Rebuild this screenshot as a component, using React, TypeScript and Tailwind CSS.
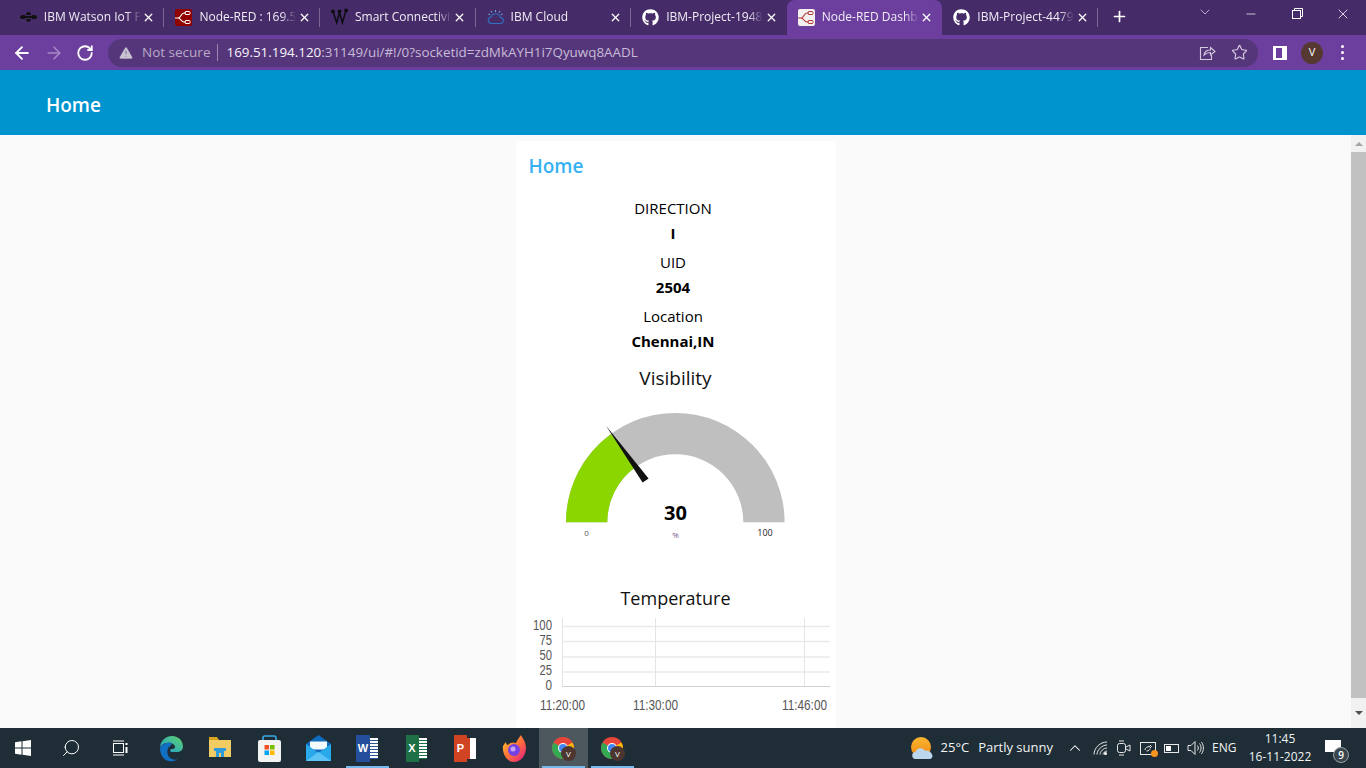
import { ReactNode } from 'react';
import { FaGithub } from 'react-icons/fa';
import { ArrowLeft, ArrowRight, ChevronDown, ChevronUp, Minus, Plus, RotateCw, Search, Star, TriangleAlert, X } from 'lucide-react';

const NodeRedIcon = ({ dark }: { dark?: boolean }) => (
  <svg width="17" height="17" viewBox="0 0 17 17">
    <rect width="17" height="17" rx="2" fill={dark ? '#8f0000' : '#f4f0f0'} />
    <path
      d="M0 9h3c3 0 3-5 6-5h2M3 9c3 0 3 4 6 4h2"
      fill="none"
      stroke={dark ? '#fff' : '#b03a3a'}
      strokeWidth="1.2"
    />
    <rect x="10" y="2.5" width="5" height="3" rx="1" fill="none" stroke={dark ? '#fff' : '#b03a3a'} />
    <rect x="10" y="11.5" width="5" height="3" rx="1" fill="none" stroke={dark ? '#fff' : '#b03a3a'} />
  </svg>
);

const WatsonIcon = () => (
  <svg width="17" height="12" viewBox="0 0 17 12" fill="#111">
    <ellipse cx="8.5" cy="6" rx="3" ry="5" />
    <ellipse cx="3.5" cy="6" rx="3.5" ry="2" />
    <ellipse cx="13.5" cy="6" rx="3.5" ry="2" />
    <rect x="5" y="4" width="7" height="1" fill="#452c68" />
    <rect x="5" y="7" width="7" height="1" fill="#452c68" />
  </svg>
);

const WeeblyIcon = () => (
  <svg width="18" height="18" viewBox="0 0 18 18" fill="none" stroke="#0b0b12" strokeWidth="1.6">
    <path d="M2 3l4 12 3-11 3 11 4-13" />
    <circle cx="2" cy="3" r="1.2" fill="#0b0b12" />
    <circle cx="9" cy="3" r="1.2" fill="#0b0b12" />
    <circle cx="16" cy="2" r="1.2" fill="#0b0b12" />
  </svg>
);

const CloudIcon = () => (
  <svg width="17" height="16" viewBox="0 0 17 16" fill="none" stroke="#2f6fc4" strokeWidth="1.1">
    <path d="M4 14.5h9a3 3 0 0 0 .5-6 5 5 0 0 0-9.5-.5 3.3 3.3 0 0 0 0 6.5z" />
    <path d="M8.5 1v2M4 2l1 1.5M13 2l-1 1.5M1.5 5l1.5.8M15.5 5l-1.5.8" stroke="#6ea6de" />
  </svg>
);

const tabs: { title: string; icon: ReactNode; active?: boolean }[] = [
  { title: 'IBM Watson IoT P', icon: <WatsonIcon /> },
  { title: 'Node-RED : 169.5', icon: <NodeRedIcon dark /> },
  { title: 'Smart Connectivit', icon: <WeeblyIcon /> },
  { title: 'IBM Cloud', icon: <CloudIcon /> },
  { title: 'IBM-Project-1948', icon: <FaGithub className="text-white text-[17px]" /> },
  { title: 'Node-RED Dashb', icon: <NodeRedIcon />, active: true },
  { title: 'IBM-Project-4479', icon: <FaGithub className="text-white text-[17px]" /> },
];

function TabStrip() {
  return (
    <div className="h-[35px] shrink-0 bg-[#452c68] flex pl-[8.8px] relative">
      {tabs.map((tab, i) => (
        <div
          key={i}
          className={
            'w-[155.6px] h-[35px] flex items-center pl-[11px] pb-[1px] relative ' +
            (tab.active ? 'bg-[#6c3f9e] rounded-t-lg' : '')
          }
        >
          <div className="w-[17px] flex justify-center shrink-0">{tab.icon}</div>
          <div className="ml-[7px] w-[97px] whitespace-nowrap text-xs text-[#f0ecf5] [mask-image:linear-gradient(to_right,black_85%,transparent)]">
            {tab.title}
          </div>
          <X size={13} strokeWidth={2.4} className="text-white ml-[1.5px]" />
          {!tab.active && i !== 4 && <div className="absolute right-0 top-[8px] h-[19px] w-px bg-[#7d688f]" />}
        </div>
      ))}
      <Plus size={17} strokeWidth={2.4} className="text-white ml-[13px] mt-[8px]" />
      <div className="ml-auto flex items-start pt-[4px] text-white">
        <div className="w-[46px] flex justify-center text-[#cbbfd9]">
          <ChevronDown size={16} strokeWidth={1.3} />
        </div>
        <div className="w-[46px] flex justify-center mt-[3px]">
          <Minus size={14} strokeWidth={1.2} />
        </div>
        <div className="w-[46px] flex justify-center mt-[4px]">
          <svg width="11" height="11" viewBox="0 0 11 11" fill="none" stroke="white">
            <rect x="0.5" y="2.5" width="8" height="8" />
            <path d="M2.5 2.5v-2h8v8h-2" />
          </svg>
        </div>
        <div className="w-[46px] flex justify-center mt-[2px]">
          <X size={16} strokeWidth={1.2} />
        </div>
      </div>
    </div>
  );
}

function Toolbar() {
  return (
    <div className="h-[35px] shrink-0 bg-[#6c3f9e] flex items-center text-white">
      <div className="w-[108px] flex pl-[12px] gap-[12px]">
        <ArrowLeft size={20} strokeWidth={2.2} />
        <ArrowRight size={20} strokeWidth={1.8} className="text-[#a68cc6]" />
        <RotateCw size={18} strokeWidth={2.4} className="mt-[1px]" />
      </div>
      <div className="w-[1150px] h-[28px] rounded-full bg-[#55367a] flex items-center pl-[10px] text-sm">
        <TriangleAlert size={16} fill="#c9c2d1" strokeWidth={1} className="text-[#55367a]" />
        <span className="ml-[8px] text-[#b8aac8] text-[13.5px]">Not secure</span>
        <div className="w-px h-[17px] bg-[#9a87b0] ml-[7px] mr-[8px]" />
        <span className="font-medium text-[#f6f2fa] text-[13.4px]">169.51.194.120</span>
        <span className="text-[#c8bbd7] text-[13.4px]">:31149/ui/#!/0?socketid=zdMkAYH1i7Qyuwq8AADL</span>
        <div className="ml-auto flex items-center gap-[15px] pr-[10px] text-[#d5cbe0]">
          <svg width="17" height="16" viewBox="0 0 17 16" fill="none" stroke="currentColor" strokeWidth="1.1">
            <path d="M9 2.5H1.5v12h11V10" />
            <path d="M5 10c.5-3 3-5 6.5-5V2.5L16 6.500 11.500 10V7.500c-3 0-5 1-6.500 2.500z" />
          </svg>
          <Star size={17} strokeWidth={1.6} />
        </div>
      </div>
      <div className="w-[14px] h-[14px] border-y-[2px] border-l-[3px] border-r-[5px] border-white ml-[15px]" />
      <div className="w-[22px] h-[22px] rounded-full bg-[#55382f] text-[11px] flex items-center justify-center ml-[14px]">
        V
      </div>
      <div className="ml-[18px] flex flex-col gap-[3px]">
        <div className="w-[3px] h-[3px] rounded-full bg-white" />
        <div className="w-[3px] h-[3px] rounded-full bg-white" />
        <div className="w-[3px] h-[3px] rounded-full bg-white" />
      </div>
    </div>
  );
}

function Gauge() {
  // 30% of the half circle, centre 159.3,122.3 in this box
  return (
    <svg width="320" height="150" viewBox="0 0 320 150" className="block">
      <path d="M50 122.3a109.3 109.3 0 0 1 218.6 0h-41.3a68 68 0 0 0-136 0z" fill="#bfbfbf" />
      <path d="M50 122.3A109.3 109.3 0 0 1 95 33.9L119.3 67.3A68 68 0 0 0 91.3 122.3z" fill="#8cd600" />
      <path d="M90 25.7L132.6 78.6 126.6 82.6z" fill="#111" />
      <text x="159.5" y="120" textAnchor="middle" fontSize="20" fontWeight="700" fill="#000">
        30
      </text>
      <text x="70.5" y="136" textAnchor="middle" fontSize="8" fill="#555">
        0
      </text>
      <text x="159.5" y="138" textAnchor="middle" fontSize="8" fill="#77558f">
        %
      </text>
      <text x="249" y="136" textAnchor="middle" fontSize="9" fill="#222">
        100
      </text>
    </svg>
  );
}

function Chart() {
  const rows = [
    { y: 16.5, label: '100', ty: 20, w: 19 },
    { y: 31.5, label: '75', ty: 34.5, w: 12.5 },
    { y: 47, label: '50', ty: 50, w: 12.5 },
    { y: 62, label: '25', ty: 65, w: 12.5 },
  ];
  const cols = [
    { x: 46.5, label: '11:20:00' },
    { x: 139.5, label: '11:30:00' },
    { x: 288.5, label: '11:46:00' },
  ];
  return (
    <svg width="320" height="118" viewBox="0 0 320 118" className="block" fontFamily="Liberation Sans, sans-serif">
      {rows.map((r) => (
        <g key={r.label}>
          <line x1="46" x2="314" y1={r.y} y2={r.y} stroke="#eaeaea" strokeWidth="1.3" />
          <text x="36" y={r.ty} textAnchor="end" fontSize="15" fill="#555" textLength={r.w} lengthAdjust="spacingAndGlyphs">
            {r.label}
          </text>
        </g>
      ))}
      <text x="36" y="79.500" textAnchor="end" fontSize="15" fill="#555" textLength="6.5" lengthAdjust="spacingAndGlyphs">
        0
      </text>
      <line x1="46" x2="314" y1="76.5" y2="76.5" stroke="#d2d2d2" />
      {cols.map((c) => (
        <g key={c.label}>
          <line x1={c.x} x2={c.x} y1="8" y2="76" stroke="#e4e4e4" />
          <text x={c.x} y="99.500" textAnchor="middle" fontSize="15" fill="#555" textLength="45" lengthAdjust="spacingAndGlyphs">
            {c.label}
          </text>
        </g>
      ))}
    </svg>
  );
}

function Card() {
  return (
    <div className="w-[320px] bg-white text-black h-full overflow-hidden">
      <div className="h-[50px] flex items-center pl-[13px] text-[19px] font-semibold text-[#36b1f2]">Home</div>
      {[
        ['DIRECTION', 'I'],
        ['UID', '2504'],
        ['Location', 'Chennai,IN'],
      ].map(([label, value]) => (
        <div key={label} className="mt-[5px] flex flex-col items-center gap-[1px] pr-[5px] text-[15px]">
          <div className="h-6 leading-6">{label}</div>
          <div className="h-6 leading-6 font-bold">{value}</div>
        </div>
      ))}
      <div className="mt-[13px] h-6 leading-6 text-center text-[19px] font-medium text-[#111]">Visibility</div>
      <div className="mt-[10px]">
        <Gauge />
      </div>
      <div className="mt-[36px] h-6 leading-6 text-center text-lg font-medium text-[#111]">Temperature</div>
      <Chart />
    </div>
  );
}

function Scrollbar() {
  return (
    <div className="w-[15px] bg-[#f1f1f1] flex flex-col items-center shrink-0">
      <div className="h-[17px] flex items-center justify-center">
        <div className="w-0 h-0 border-x-[4px] border-x-transparent border-b-[4px] border-b-[#a3a3a3]" />
      </div>
      <div className="w-full h-[546px] bg-[#c1c1c1]" />
      <div className="flex-1 flex items-center justify-center">
        <div className="w-0 h-0 border-x-[4px] border-x-transparent border-t-[4px] border-t-[#505050]" />
      </div>
    </div>
  );
}

const ChromeIcon = () => (
  <div className="relative w-[24px] h-[24px]">
    <svg width="24" height="24" viewBox="0 0 24 24">
      <circle cx="12" cy="12" r="11" fill="#e8453a" />
      <path d="M12 12L2.5 6.5A11 11 0 0 0 12 23z" fill="#34a853" />
      <path d="M12 12V23A11 11 0 0 0 21.5 6.5z" fill="#fbbc05" />
      <circle cx="12" cy="12" r="5" fill="#fff" />
      <circle cx="12" cy="12" r="4" fill="#4285f4" />
    </svg>
    <div className="absolute left-[10px] top-[10px] w-[15px] h-[15px] rounded-full bg-[#4d3630] text-[8px] text-white flex items-center justify-center">
      V
    </div>
  </div>
);

const appIcons: { key: string; icon: ReactNode; underline?: boolean; active?: boolean }[] = [
  {
    key: 'edge',
    icon: (
      <svg width="25" height="27" viewBox="0 0 25 27">
        <defs>
          <linearGradient id="edgeTop" x1="0" y1="1" x2="1" y2="0">
            <stop offset="0" stopColor="#1f9bd6" />
            <stop offset="1" stopColor="#5fd36a" />
          </linearGradient>
        </defs>
        <path d="M1 12C2 5 7 1 13 1c7 0 11 5 11 11 0 3-3 5-6 5h-6c-1-1-1-2 0-3 1 0 4 0 4-2 0-3-5-5-8-4-3 0-5 2-7 4z" fill="url(#edgeTop)" />
        <path d="M1 13c2-4 7-6 11-5 1 1 1 2-1 3-3 2-4 8 0 12 3 2 6 2 8 1-3 2-6 3-9 2C4 25 1 19 1 13z" fill="#1270c4" />
      </svg>
    ),
  },
  {
    key: 'explorer',
    icon: (
      <svg width="22" height="22" viewBox="0 0 22 22">
        <path d="M0 0h8l2 3H0z" fill="#d9a223" />
        <rect y="3" width="22" height="17" fill="#f2cb62" />
        <path d="M5 11h12v3h-2v6h-3v-4H10v4H7v-6H5z" fill="#2f9bdb" />
      </svg>
    ),
  },
  {
    key: 'store',
    icon: (
      <svg width="23" height="27" viewBox="0 0 23 27">
        <path d="M5 8V3a2 2 0 0 1 2-2h9a2 2 0 0 1 2 2v5" fill="none" stroke="#3aa9e8" strokeWidth="1.6" />
        <rect y="5" width="23" height="22" rx="2" fill="#f3f3f3" />
        <rect x="6.500" y="10" width="4.500" height="4.500" fill="#f25022" />
        <rect x="12" y="10" width="4.500" height="4.500" fill="#7fba00" />
        <rect x="6.500" y="15.500" width="4.500" height="4.500" fill="#00a4ef" />
        <rect x="12" y="15.500" width="4.500" height="4.500" fill="#ffb900" />
      </svg>
    ),
  },
  {
    key: 'mail',
    icon: (
      <svg width="25" height="26" viewBox="0 0 25 26">
        <path d="M12.5 0L25 9v17H0V9z" fill="#0f6cbd" />
        <path d="M4 6.500h17v8h-17z" fill="#f4fbff" />
        <path d="M0 9l12.500 9L25 9v17H0z" fill="#29a8ea" />
        <path d="M0 26l12.500-9 12.500 9z" fill="#5cc4f5" />
      </svg>
    ),
  },
  {
    key: 'word',
    underline: true,
    icon: (
      <div className="flex items-center">
        <div className="w-[14px] h-[27px] bg-[#234f9c] text-white text-[11px] font-bold flex items-center justify-center [font-family:'Liberation_Sans',sans-serif]">
          W
        </div>
        <div className="w-[8px] h-[21px] bg-[repeating-linear-gradient(#fff_0_2px,#2b579a_2px_3px)]" />
      </div>
    ),
  },
  {
    key: 'excel',
    icon: (
      <div className="flex items-center">
        <div className="w-[13px] h-[27px] bg-[#1e7145] text-white text-[11px] font-bold flex items-center justify-center [font-family:'Liberation_Sans',sans-serif]">
          X
        </div>
        <div className="w-[8px] h-[21px] bg-[repeating-linear-gradient(#fff_0_2px,#1e7145_2px_3px)]" />
      </div>
    ),
  },
  {
    key: 'powerpoint',
    icon: (
      <div className="flex items-center">
        <div className="w-[13px] h-[27px] bg-[#d04423] text-white text-[11px] font-bold flex items-center justify-center [font-family:'Liberation_Sans',sans-serif]">
          P
        </div>
        <div className="w-[9px] h-[21px] bg-white border-l-[3px] border-[#d04423]" />
      </div>
    ),
  },
  {
    key: 'firefox',
    icon: (
      <svg width="24" height="28" viewBox="0 0 24 28">
        <defs>
          <linearGradient id="ff" x1="0" y1="0" x2="1" y2="1">
            <stop offset="0" stopColor="#ffcb2e" />
            <stop offset="0.5" stopColor="#ff7139" />
            <stop offset="1" stopColor="#e31587" />
          </linearGradient>
        </defs>
        <path d="M1 12c1-2 2-3 3-4 0 2 1 3 2 3 2-3 6-3 8-2 1-3 3-5 5-8 1 3 5 6 5 13 0 7-5 14-12 14S0 20 1 12z" fill="url(#ff)" />
        <circle cx="12" cy="16" r="6" fill="#7542e5" />
        <circle cx="11" cy="15" r="2.5" fill="#c9a5f5" />
      </svg>
    ),
  },
  { key: 'chrome-1', active: true, underline: true, icon: <ChromeIcon /> },
  { key: 'chrome-2', underline: true, icon: <ChromeIcon /> },
];

function Taskbar() {
  return (
    <div className="h-[40px] shrink-0 bg-[#1f2d36] flex items-center text-white relative">
      <div className="w-[46px] flex justify-center">
        <svg width="16" height="16" viewBox="0 0 16 16" fill="#fff">
          <path d="M0 2.300l6.500-1v6.200H0zM7.500 1.200L16 0v7.500H7.500zM0 8.500h6.500v6.200l-6.500-1zM7.500 8.500H16V16l-8.500-1.200z" />
        </svg>
      </div>
      <div className="w-[50px] flex justify-center">
        <Search size={20} strokeWidth={1.2} className="-scale-x-100" />
      </div>
      <div className="w-[48px] flex justify-center">
        <svg width="16" height="16" viewBox="0 0 16 16" fill="none" stroke="#fff">
          <rect x="1.500" y="3.500" width="10" height="9" />
          <path d="M1 1h11M1 15h11" />
          <path d="M14.500 3v2M14.500 7v6" strokeWidth="2" />
        </svg>
      </div>
      <div className="w-[2.5px]" />
      {appIcons.map((app) => (
        <div
          key={app.key}
          className={'w-[49px] h-full flex items-center justify-center relative ' + (app.active ? 'bg-[#4c585e]' : '')}
        >
          {app.icon}
          {app.underline && <div className="absolute bottom-0 left-[3px] right-[3px] h-[2px] bg-[#76b9ed]" />}
        </div>
      ))}
      <div className="ml-auto flex items-center h-full">
        <svg width="22" height="22" viewBox="0 0 22 22">
          <defs>
            <linearGradient id="sun" x1="0" y1="0" x2="0" y2="1">
              <stop offset="0" stopColor="#fbb62e" />
              <stop offset="1" stopColor="#ee8a17" />
            </linearGradient>
          </defs>
          <circle cx="10" cy="10" r="10" fill="url(#sun)" />
          <path d="M5 22a3.500 3.500 0 0 1-.5-7c1-4 7-5 9-1.500 4-.5 7 1.500 8 5 0 2-1 3.500-3 3.500z" fill="#bcd6ee" />
        </svg>
        <span className="ml-[8px] text-[13px] text-[#f2f4f5]">25°C</span>
        <span className="ml-[9px] text-[13px] text-[#f2f4f5]">Partly sunny</span>
        <ChevronUp size={18} strokeWidth={1.4} className="ml-[13px]" />
        <svg width="15" height="14" viewBox="0 0 15 14" fill="none" stroke="#e8e8e8" strokeWidth="1" className="ml-[9px]">
          <path d="M1 13.500C1 7 7 1 14 1M4 13.500C4 9 9 4 14 4M7 13.500C7 10.500 10.500 7 14 7M10 13.500c0-1.500 2-3.500 4-3.500" />
          <circle cx="12.500" cy="12.500" r="1.500" fill="#fff" stroke="none" />
        </svg>
        <svg width="14" height="16" viewBox="0 0 14 16" fill="none" stroke="#e8e8e8" className="ml-[9px]">
          <rect x="0.500" y="3.500" width="8" height="9" rx="2" />
          <path d="M9 7l4-2v6l-4-2M2 1h5M2 15h5" />
        </svg>
        <div className="relative ml-[9px]">
          <svg width="16" height="13" viewBox="0 0 16 13" fill="none" stroke="#e8e8e8" className="block">
            <rect x="0.500" y="0.500" width="15" height="12" />
            <path d="M5 8c0-2 2-3.500 5-3.500M10 3l1.500 1.500L10 6M6.500 9c2 0 3.500-1 3.500-2.500" />
          </svg>
          <div className="absolute -right-[2px] -bottom-[2px] w-[7px] h-[7px] rounded-full bg-[#f7931e]" />
        </div>
        <div className="ml-[8px] w-[15px] h-[9px] border border-[#e8e8e8] p-[1px] pr-[7px]">
          <div className="w-full h-full bg-white" />
        </div>
        <svg width="17" height="16" viewBox="0 0 17 16" fill="none" stroke="#e8e8e8" className="ml-[8px]">
          <path d="M1 5.500h3L8 1.500v13l-4-4H1z" />
          <path d="M10.500 5.500c1 1.500 1 3.500 0 5M12.500 3.500c2 2.500 2 6.500 0 9M14.500 2c2.500 3.500 2.500 8.500 0 12" />
        </svg>
        <span className="ml-[8px] text-xs text-[#f2f4f5] w-[24px]">ENG</span>
        <div className="ml-[7px] w-[74px] flex flex-col items-center text-xs leading-[18px] text-[#f2f4f5]">
          <span>11:45</span>
          <span>16-11-2022</span>
        </div>
        <div className="relative ml-[8px] mr-[25px] w-[16px] h-[12px] -mt-[4px] bg-white">
          <div className="absolute -right-[8px] top-[7px] w-[16px] h-[16px] rounded-full bg-[#3a464d] border border-[#99a2a6] text-[10px] font-semibold flex items-center justify-center">
            9
          </div>
        </div>
      </div>
    </div>
  );
}

export default function App() {
  return (
    <div className="h-screen w-[1366px] overflow-hidden flex flex-col bg-[#fafafa] [font-family:'Open_Sans','Noto_Sans',sans-serif]">
      <TabStrip />
      <Toolbar />
      <div className="h-[65px] shrink-0 bg-[#0094ce] flex items-center pl-[46px] pt-[6px] text-white text-[19px] font-semibold">
        Home
      </div>
      <div className="flex-1 flex min-h-0">
        <div className="flex-1 flex justify-center pt-[6px] min-w-0">
          <Card />
        </div>
        <Scrollbar />
      </div>
      <Taskbar />
    </div>
  );
}
